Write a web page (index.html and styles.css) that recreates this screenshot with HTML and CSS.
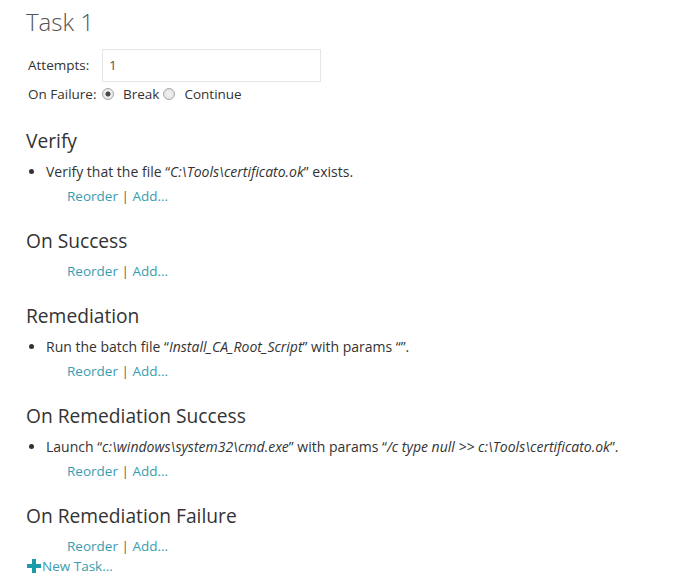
FILE: index.html
```html
<!DOCTYPE html>
<html>
<head>
<meta charset="utf-8">
<link rel="stylesheet" href="styles.css">
</head>
<body>
<div class="page">
  <h1 class="title">Task 1</h1>
  <div class="form">
    <div class="row attempts">
      <label class="label">Attempts:</label>
      <input class="input" type="text" value="1">
    </div>
    <div class="row failure">
      <span class="label">On Failure:</span>
      <label class="radio"><input type="radio" name="f" checked><span class="radio-text">Break</span></label>
      <label class="radio"><input type="radio" name="f"><span class="radio-text">Continue</span></label>
    </div>
  </div>

  <div class="section">
    <h2 class="heading">Verify</h2>
    <ul class="items">
      <li>Verify that the file “<em>C:\Tools\certificato.ok</em>” exists.</li>
    </ul>
    <div class="actions"><a class="link">Reorder</a> <span class="sep">|</span> <a class="link">Add...</a></div>
  </div>

  <div class="section">
    <h2 class="heading">On Success</h2>
    <div class="actions"><a class="link">Reorder</a> <span class="sep">|</span> <a class="link">Add...</a></div>
  </div>

  <div class="section">
    <h2 class="heading">Remediation</h2>
    <ul class="items">
      <li>Run the batch file “<em>Install_CA_Root_Script</em>” with params “”.</li>
    </ul>
    <div class="actions"><a class="link">Reorder</a> <span class="sep">|</span> <a class="link">Add...</a></div>
  </div>

  <div class="section">
    <h2 class="heading">On Remediation Success</h2>
    <ul class="items">
      <li>Launch “<em>c:\windows\system32\cmd.exe</em>” with params “<em>/c type null &gt;&gt; c:\Tools\certificato.ok</em>”.</li>
    </ul>
    <div class="actions"><a class="link">Reorder</a> <span class="sep">|</span> <a class="link">Add...</a></div>
  </div>

  <div class="section">
    <h2 class="heading">On Remediation Failure</h2>
    <div class="actions"><a class="link">Reorder</a> <span class="sep">|</span> <a class="link">Add...</a></div>
  </div>

  <a class="new-task"><svg class="plus" width="16" height="16" viewBox="0 0 16 16"><rect x="6" y="1" width="4" height="14" fill="#1c9aa8"/><rect x="1" y="6" width="14" height="4" fill="#1c9aa8"/></svg>New Task...</a>
</div>
</body>
</html>
```

FILE: styles.css
```css
html, body {
  margin: 0;
  padding: 0;
  background: #fff;
}
body {
  font-family: "Open Sans", "DejaVu Sans", sans-serif;
  font-size: 13.5px;
  color: #333;
}
.page {
  padding-left: 26px;
}
.title {
  margin: 0;
  padding-top: 6px;
  font-size: 24px;
  line-height: 32px;
  font-weight: 300;
  color: #555;
}
.form {
  margin-top: 11px;
}
.row {
  display: flex;
  align-items: center;
}
.attempts {
  height: 32px;
}
.label {
  width: 74px;
  padding-left: 2px;
  flex: none;
}
.input {
  box-sizing: border-box;
  width: 219px;
  height: 33px;
  border: 1px solid #e6e6e6;
  padding: 0 6px;
  font-family: "Open Sans", sans-serif;
  font-size: 13.5px;
  color: #555;
  outline: none;
}
.failure {
  height: 22px;
  margin-top: 2px;
}
.radio {
  display: inline-flex;
  align-items: center;
}
.radio input {
  -webkit-appearance: none;
  appearance: none;
  box-sizing: border-box;
  margin: 0;
  width: 12px;
  height: 12px;
  border-radius: 50%;
  border: 1px solid #a8a8a8;
  background: radial-gradient(circle, #f4f4f4 0, #dcdcdc 100%);
}
.radio input:checked {
  background: radial-gradient(circle, #4a4a4a 0, #4a4a4a 2.3px, #f0f0f0 2.8px, #dcdcdc 100%);
}
.radio-text {
  margin-left: 9px;
}
.radio + .radio {
  margin-left: 4px;
}
.section {
  margin-top: 18px;
}
.section + .section {
  margin-top: 14px;
}
.heading {
  margin: 0;
  font-size: 19.2px;
  line-height: 36px;
  font-weight: 400;
  color: #333;
}
.items {
  margin: 0;
  padding-left: 20px;
  line-height: 25px;
  font-size: 14px;
}
.items em {
  font-style: italic;
}
.actions {
  padding-left: 41px;
  line-height: 25px;
}
.link {
  color: #3a9cae;
  cursor: pointer;
}
.sep {
  color: #6b5a4a;
}
.new-task {
  display: flex;
  align-items: center;
  height: 16px;
  margin-top: -1px;
  color: #3a9cae;
  cursor: pointer;
}
```
